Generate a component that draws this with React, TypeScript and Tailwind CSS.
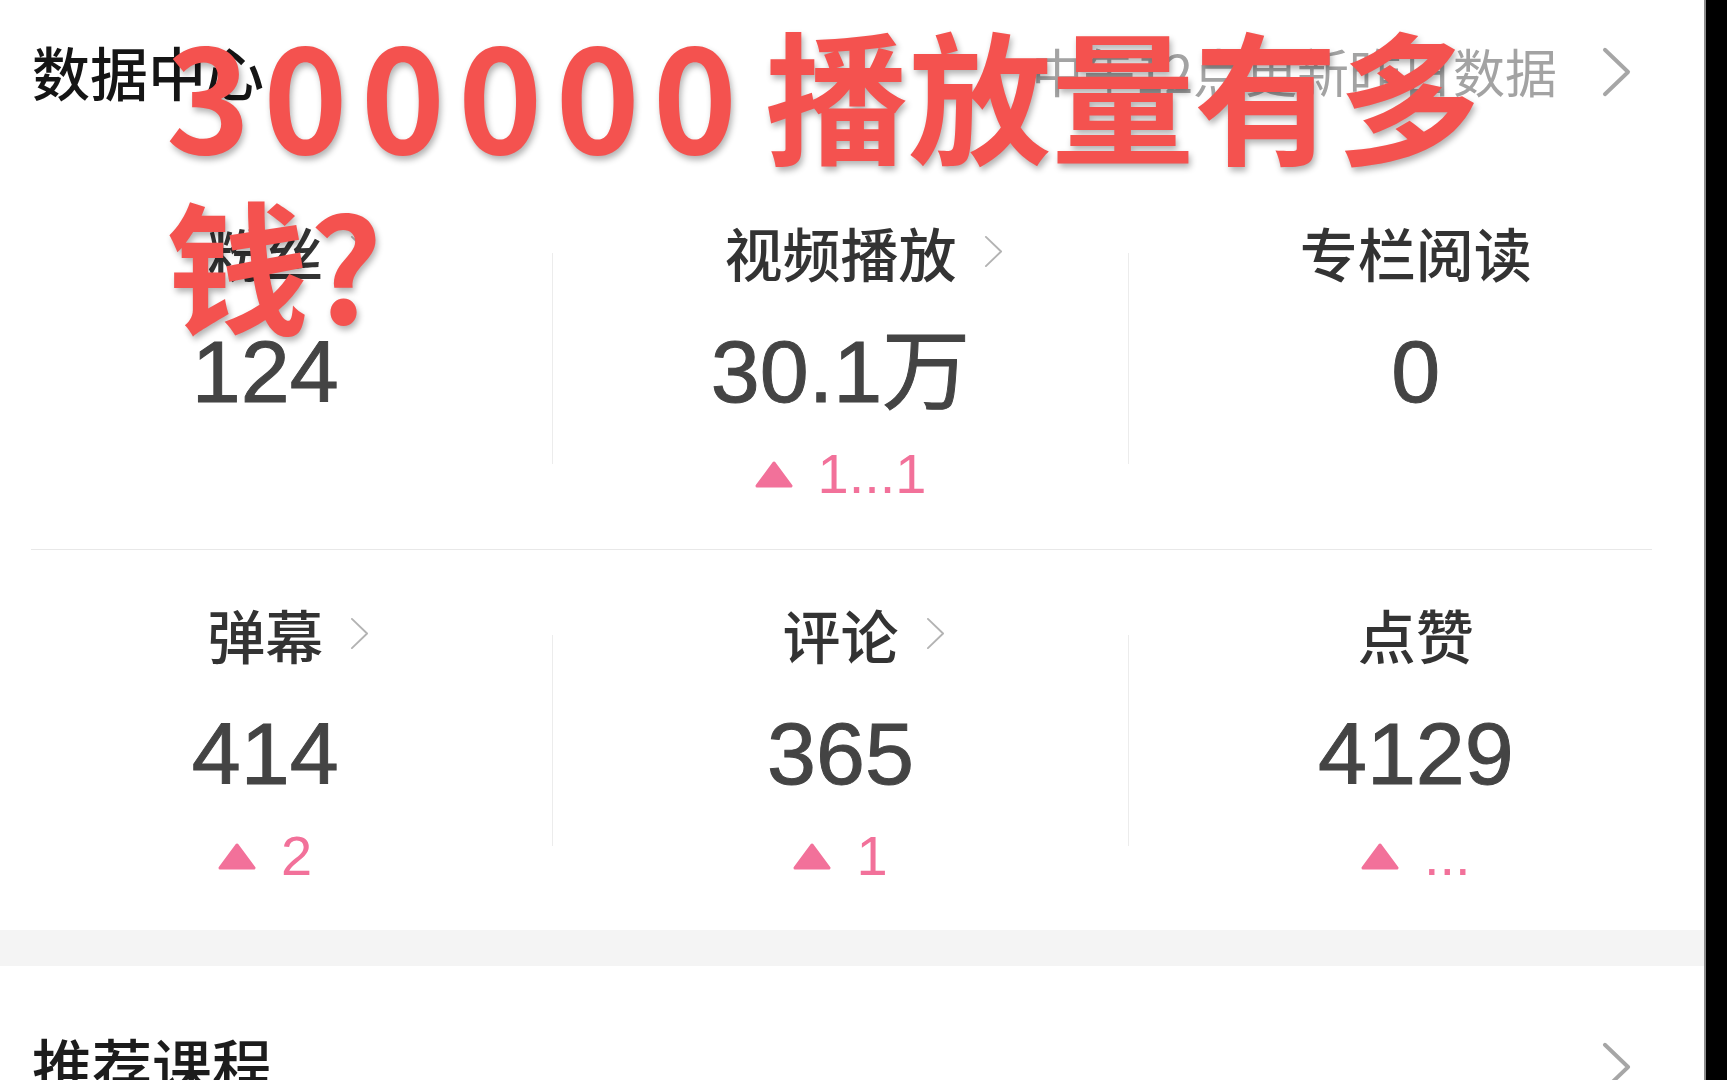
import React from 'react';

const cjk = "font-['Noto_Sans_CJK_SC',sans-serif]";
const num = "font-['Liberation_Sans','Noto_Sans_CJK_SC',sans-serif]";

type Stat = { label: string; value: string; delta?: string; link?: boolean };

const rows: Stat[][] = [
  [
    { label: '粉丝', value: '124', link: true },
    { label: '视频播放', value: '30.1万', delta: '1...1', link: true },
    { label: '专栏阅读', value: '0' },
  ],
  [
    { label: '弹幕', value: '414', delta: '2', link: true },
    { label: '评论', value: '365', delta: '1', link: true },
    { label: '点赞', value: '4129', delta: '...' },
  ],
];

function Chevron({ className = '', stroke = 4 }: { className?: string; stroke?: number }) {
  return (
    <svg viewBox="0 0 30 52" className={className} fill="none">
      <polyline points="3,3 27,26 3,49" stroke="currentColor" strokeWidth={stroke} strokeLinecap="round" strokeLinejoin="round" />
    </svg>
  );
}

function Up() {
  return (
    <svg viewBox="0 0 38 27" className="w-[38px] h-[27px]">
      <polygon points="19,2 36,25 2,25" fill="#f2719a" stroke="#f2719a" strokeWidth="3" strokeLinejoin="round" />
    </svg>
  );
}

function Cell({ s }: { s: Stat }) {
  return (
    <div className="flex-1 flex flex-col items-center pt-[55px]">
      <div className={`relative h-[58px] text-[58px] leading-none font-medium text-[#333333] ${cjk}`}>
        {s.label}
        {s.link && (
          <Chevron stroke={3} className="absolute left-full top-[11px] ml-[27px] w-[19px] h-[35px] text-[#b3b3b3]" />
        )}
      </div>
      <div className={`mt-[47px] h-[88px] text-[88px] leading-none text-[#444444] [-webkit-text-stroke:1px_#444444] ${num}`}>{s.value}</div>
      {s.delta && (
        <div className="mt-[30px] h-[56px] flex items-center gap-[25px] text-[#f2719a]">
          <Up />
          <span className={`text-[56px] leading-none ${num}`}>{s.delta}</span>
        </div>
      )}
    </div>
  );
}

function Row({ items, height }: { items: Stat[]; height: string }) {
  return (
    <div className={`flex shrink-0 ml-[-22px] w-[1725px] ${height}`}>
      <Cell s={items[0]} />
      <div className="w-px h-[211px] mt-[85px] bg-[#ececec] shrink-0" />
      <Cell s={items[1]} />
      <div className="w-px h-[211px] mt-[85px] bg-[#ececec] shrink-0" />
      <Cell s={items[2]} />
    </div>
  );
}

export default function App() {
  return (
    <div className="relative w-[1727px] h-[1080px] overflow-hidden bg-white flex">
      <div className="w-[1704px] shrink-0 flex flex-col overflow-hidden">
        {/* header */}
        <div className="h-[168px] shrink-0 flex items-start justify-between pl-[32px] pr-[73px] pt-[42px]">
          <div className={`text-[58px] leading-none font-medium text-[#151515] ${cjk}`}>数据中心</div>
          <div className="flex items-start">
            <span className={`text-[52px] leading-none text-[#a3a3a3] mt-[3px] ${cjk}`}>中午12点更新昨日数据</span>
            <Chevron className="ml-[45px] mt-[4px] w-[29px] h-[52px] text-[#a6a6a6]" />
          </div>
        </div>

        <Row items={rows[0]} height="h-[381px]" />
        <div className="shrink-0 ml-[31px] w-[1621px] h-px bg-[#e8e8e8]" />
        <Row items={rows[1]} height="h-[380px]" />

        <div className="h-[36px] bg-[#f4f4f4] shrink-0" />

        <div className="shrink-0 flex items-start justify-between pl-[32px] pr-[73px] pt-[68px]">
          <div className={`text-[60px] leading-none font-medium text-[#1c1c1c] ${cjk}`}>推荐课程</div>
          <Chevron className="mt-[7px] w-[29px] h-[52px] text-[#a6a6a6]" />
        </div>
      </div>
      <div className="flex-1 bg-black border-l-2 border-[#8c8c8c]" />

      {/* overlay title */}
      <div
        className={`absolute left-[166px] top-[7px] w-[1420px] text-[143px] leading-[170px] font-bold text-[#f4524f] [text-shadow:2px_4px_6px_rgba(0,0,0,0.3)] ${cjk}`}
      >
        <span className="tracking-[13px] mr-[15px]">300000</span>播放量有多钱?
      </div>
    </div>
  );
}
